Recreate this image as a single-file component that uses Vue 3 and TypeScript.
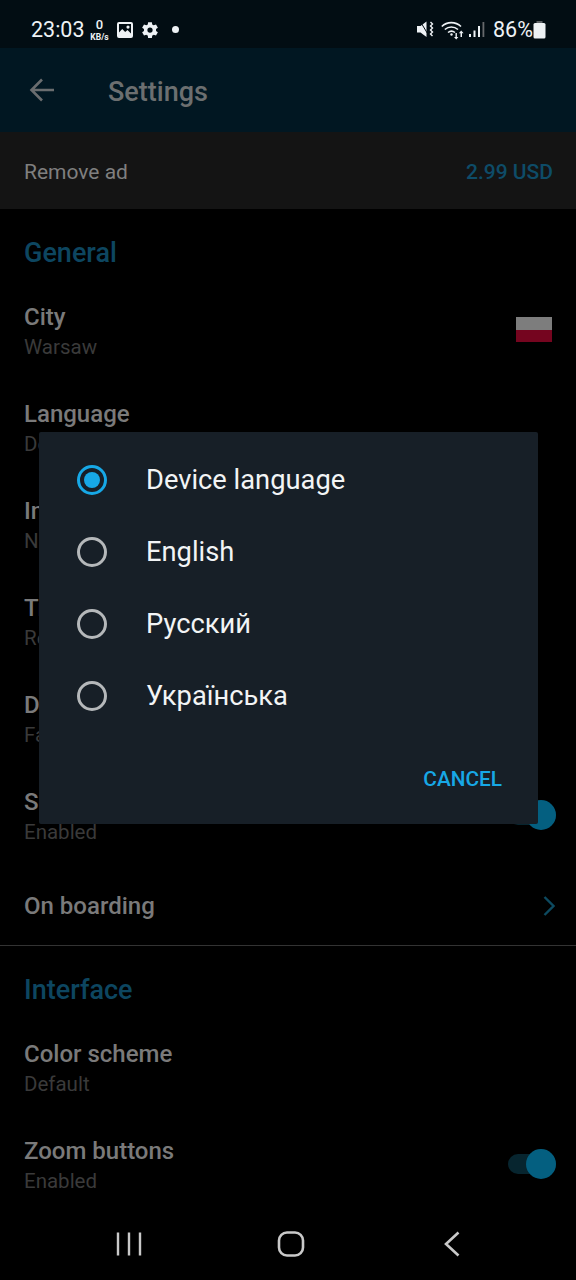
<script setup lang="ts">
import { ref } from "vue";

interface Row {
  title: string;
  sub: string;
  flag?: boolean;
  toggle?: boolean;
}

const generalRows: Row[] = [
  { title: "City", sub: "Warsaw", flag: true },
  { title: "Language", sub: "Device language" },
  { title: "Information", sub: "None" },
  { title: "Transport", sub: "Regular" },
  { title: "Data", sub: "Fast" },
  { title: "Sound", sub: "Enabled", toggle: true },
];

const interfaceRows: Row[] = [
  { title: "Color scheme", sub: "Default" },
  { title: "Zoom buttons", sub: "Enabled", toggle: true },
];

const languages = ["Device language", "English", "Русский", "Українська"];
const selected = ref("Device language");
</script>

<template>
  <div class="phone">
    <div class="status">
      <div class="status-left">
        <span class="time">23:03</span>
        <span class="speed"><b>0</b><i>KB/s</i></span>
        <svg class="st-icon" width="16" height="16" viewBox="0 0 16 16">
          <path fill="#eef2f5" fill-rule="evenodd" d="M2 0h12a2 2 0 0 1 2 2v12a2 2 0 0 1-2 2H2a2 2 0 0 1-2-2V2a2 2 0 0 1 2-2zm0 2v8.500l3.200-3.400 3 3 2.300-2L14 11.500V2H2zm9 1.500a1.600 1.600 0 1 1 0 3.200 1.600 1.600 0 0 1 0-3.200z" />
        </svg>
        <svg class="st-icon gear" width="18" height="18" viewBox="0 0 24 24">
          <path fill="#eef2f5" d="M20 13.200a8 8 0 0 0 0-2.400l2.500-1.900-2.500-4.300-3 1.200a8 8 0 0 0-2-1.200L14.500 1.500h-5L9 4.600a8 8 0 0 0-2 1.200L4 4.600 1.500 8.900 4 10.800a8 8 0 0 0 0 2.400l-2.500 1.900L4 19.400l3-1.200a8 8 0 0 0 2 1.200l.5 3.100h5l.5-3.100a8 8 0 0 0 2-1.200l3 1.200 2.500-4.300-2.500-1.900zM12 15.500a3.500 3.500 0 1 1 0-7 3.500 3.500 0 0 1 0 7z" />
        </svg>
        <span class="dot"></span>
      </div>
      <div class="status-right">
        <svg width="17" height="17" viewBox="0 0 17 17">
          <path fill="#eef2f5" d="M0 5h3.500L9.500 .5v15.500L3.500 11.500H0z" />
          <path stroke="#020d13" stroke-width="1" d="M3 0l9 15" />
          <path fill="none" stroke="#eef2f5" stroke-width="1.400" d="M13.500 1l2 2-2 2 2 2-2 2 2 2-2 2 2 2" />
        </svg>
        <svg class="wifi" width="24" height="20" viewBox="0 0 24 20">
          <g fill="none" stroke="#eef2f5" stroke-width="1.600">
            <path d="M.8 6.500C6 1.300 14.500 1.300 20 6.500" />
            <path d="M3.800 9.500c3.800-3.400 9.300-3.400 13.200 0" />
            <path d="M7 12.500c2-1.600 5-1.600 7 0" />
          </g>
          <circle cx="10.500" cy="14.500" r="1.200" fill="#eef2f5" />
          <path fill="#eef2f5" d="M14.500 13h1.400v4h1.500l-2.200 2.600-2.200-2.600h1.500zM20.200 10.500l2.400 2.800h-1.600V17h-1.500v-3.700h-1.600z" />
        </svg>
        <svg class="signal" width="16" height="17" viewBox="0 0 16 17">
          <rect x="0" y="13" width="2" height="3" fill="#eef2f5" />
          <rect x="4.500" y="9.500" width="2" height="6.500" fill="#eef2f5" />
          <rect x="9" y="5" width="2" height="11" fill="#eef2f5" />
          <rect x="13.500" y="1" width="1.800" height="15" fill="#66696c" />
        </svg>
        <span class="pct">86%</span>
        <svg class="batt" width="13" height="18" viewBox="0 0 13 18">
          <rect x="3.500" y="0" width="6" height="3" fill="#5d6266" />
          <rect x="0.500" y="2" width="12" height="15.500" rx="1.500" fill="#eef2f5" />
        </svg>
      </div>
    </div>

    <div class="content">
      <header class="appbar">
        <svg class="back" width="26" height="26" viewBox="0 0 26 26">
          <path fill="none" stroke="#6a6d6f" stroke-width="2.600" d="M25 13H3M13 2.500L2.500 13 13 23.500" />
        </svg>
        <h1>Settings</h1>
      </header>

      <div class="remove-ad">
        <span>Remove ad</span>
        <span class="price">2.99 USD</span>
      </div>

      <section class="section">
        <h2>General</h2>
        <div v-for="row in generalRows" :key="row.title" class="row">
          <div class="labels">
            <div class="title">{{ row.title }}</div>
            <div class="sub">{{ row.sub }}</div>
          </div>
          <div v-if="row.flag" class="flag"></div>
          <div v-if="row.toggle" class="toggle"><span></span></div>
        </div>
        <div class="row short">
          <div class="title">On boarding</div>
          <svg class="chev" width="12" height="20" viewBox="0 0 12 20">
            <path fill="none" stroke="#0d4a60" stroke-width="2.400" d="M1.500 1l9 9-9 9" />
          </svg>
        </div>
      </section>

      <section class="section ruled">
        <h2>Interface</h2>
        <div v-for="row in interfaceRows" :key="row.title" class="row">
          <div class="labels">
            <div class="title">{{ row.title }}</div>
            <div class="sub">{{ row.sub }}</div>
          </div>
          <div v-if="row.toggle" class="toggle"><span></span></div>
        </div>
      </section>

      <div class="dialog">
        <div
          v-for="lang in languages"
          :key="lang"
          class="option"
          @click="selected = lang"
        >
          <span class="radio" :class="{ on: selected === lang }"></span>
          <span>{{ lang }}</span>
        </div>
        <div class="actions"><span class="cancel">CANCEL</span></div>
      </div>
    </div>

    <nav class="navbar">
      <svg width="26" height="26" viewBox="0 0 26 26">
        <path stroke="#c9c9c9" stroke-width="2.400" d="M2 1.500v23M13 1.500v23M24 1.500v23" />
      </svg>
      <svg width="28" height="28" viewBox="0 0 28 28">
        <rect x="2" y="2.500" width="24" height="23" rx="8" fill="none" stroke="#c9c9c9" stroke-width="2.600" />
      </svg>
      <svg width="18" height="28" viewBox="0 0 18 28">
        <path fill="none" stroke="#c9c9c9" stroke-width="2.600" d="M15.500 2.500L3 14l12.500 11.500" />
      </svg>
    </nav>
  </div>
</template>

<style>
html,
body {
  margin: 0;
  background: #000;
}
</style>

<style scoped>
.phone {
  width: 576px;
  height: 1280px;
  display: flex;
  flex-direction: column;
  overflow: hidden;
  background: #000;
  font-family: Roboto, "Liberation Sans", sans-serif;
}

.status {
  height: 48px;
  box-sizing: border-box;
  flex: none;
  display: flex;
  align-items: center;
  justify-content: space-between;
  padding: 11px 30px 0 31px;
  background: #020d13;
  color: #eef2f5;
}

.status-left,
.status-right {
  display: flex;
  align-items: center;
}

.time {
  font-size: 21.500px;
  width: 59px;
}

.speed {
  display: flex;
  flex-direction: column;
  align-items: center;
  width: 19px;
  margin-right: 8px;
}

.speed b {
  font-size: 13px;
  font-weight: 500;
  line-height: 15.500px;
}

.speed i {
  font-size: 8.500px;
  font-weight: 700;
  font-style: normal;
  line-height: 10px;
}

.st-icon {
  margin-right: 8px;
}

.gear {
  margin-right: 13px;
}

.dot {
  width: 7px;
  height: 7px;
  border-radius: 50%;
  background: #eef2f5;
}

.wifi {
  margin-left: 7px;
}

.signal {
  margin-left: 4px;
}

.pct {
  font-size: 21.500px;
  width: 38px;
  margin-left: 8px;
}

.batt {
  margin-left: 2px;
}

.content {
  position: relative;
  flex: 1;
  min-height: 0;
  overflow: hidden;
}

.appbar {
  height: 84px;
  display: flex;
  align-items: center;
  padding-left: 29px;
  background: #011722;
}

.back {
  flex: none;
}

.appbar h1 {
  margin: 3px 0 0 53px;
  font-size: 27px;
  font-weight: 500;
  color: #6c6f70;
}

.remove-ad {
  height: 77px;
  box-sizing: border-box;
  padding: 2px 24px 0;
  display: flex;
  align-items: center;
  justify-content: space-between;
  background: #141414;
  font-size: 21px;
  color: #7f7f7f;
}

.price {
  color: #0e4c68;
  font-weight: 500;
  margin-right: -1px;
}

.section h2 {
  margin: 0;
  height: 74.500px;
  box-sizing: border-box;
  padding: 29px 24px 0;
  font-size: 27px;
  line-height: 30px;
  font-weight: 500;
  color: #0d4660;
}

.ruled {
  border-top: 1px solid #333;
}

.row {
  height: 97px;
  display: flex;
  align-items: center;
  justify-content: space-between;
  padding: 0 20px 0 24px;
}

.short {
  height: 79px;
  box-sizing: border-box;
  padding-top: 1px;
}

.title {
  font-size: 24px;
  line-height: 30px;
  font-weight: 500;
  color: #7a7a7a;
}

.sub {
  font-size: 20.500px;
  line-height: 30px;
  color: #3a3a3a;
}

.flag {
  width: 36px;
  height: 25px;
  margin: -6px 4px 0 0;
  background: linear-gradient(#7d7d7d 0 50%, #75051f 50% 100%);
}

.toggle {
  position: relative;
  width: 48px;
  height: 20px;
  margin-top: -4px;
  border-radius: 10px;
  background: #07252f;
}

.toggle span {
  position: absolute;
  top: -5px;
  right: 0;
  width: 30px;
  height: 30px;
  border-radius: 50%;
  background: #045f80;
}

.chev {
  margin-right: 1px;
}

.dialog {
  position: absolute;
  top: 384px;
  left: 39px;
  width: 499px;
  height: 392px;
  box-sizing: border-box;
  padding-top: 12px;
  background: #171f27;
  border-radius: 2px;
}

.option {
  height: 72px;
  display: flex;
  align-items: center;
  gap: 39px;
  padding-left: 38px;
  font-size: 27.300px;
  color: #f2f4f5;
}

.radio {
  position: relative;
  width: 30px;
  height: 30px;
  box-sizing: border-box;
  border: 3px solid #b5b8ba;
  border-radius: 50%;
}

.radio.on {
  border-color: #17a8e6;
}

.radio.on::after {
  content: "";
  position: absolute;
  inset: 4px;
  border-radius: 50%;
  background: #17a8e6;
}

.actions {
  height: 92px;
  display: flex;
  align-items: center;
  justify-content: flex-end;
  padding: 1px 36px 0 0;
  box-sizing: border-box;
}

.cancel {
  font-size: 20.800px;
  font-weight: 500;
  color: #17a8e6;
}

.navbar {
  height: 80px;
  box-sizing: border-box;
  padding-top: 8px;
  flex: none;
  position: relative;
  background: #000;
  display: grid;
  grid-template-columns: 116px 26px 135px 28px 138px 18px;
  align-items: center;
}

.navbar svg:nth-child(1) {
  grid-column: 2;
}

.navbar svg:nth-child(2) {
  grid-column: 4;
}

.navbar svg:nth-child(3) {
  grid-column: 6;
}
</style>
